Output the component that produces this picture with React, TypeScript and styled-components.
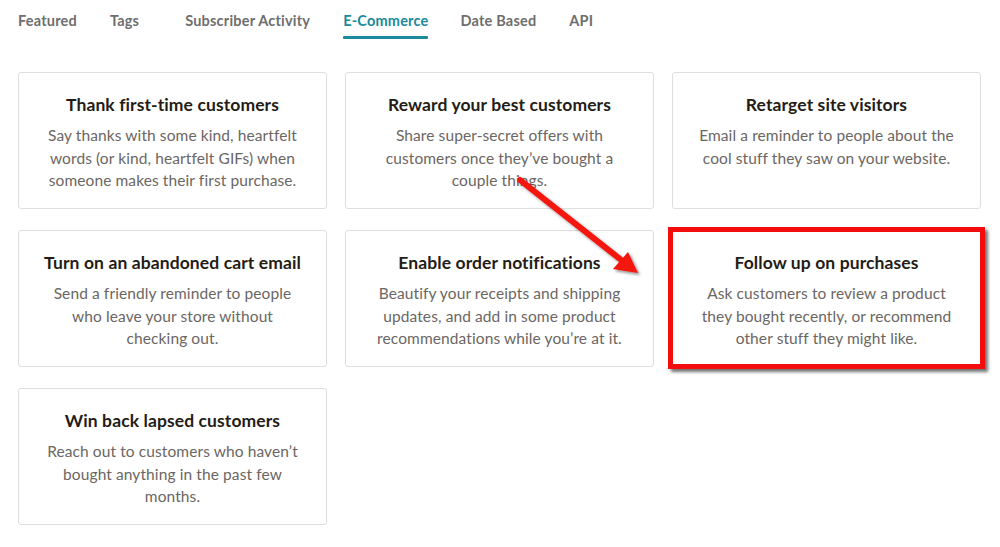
import React from 'react';
import styled, { createGlobalStyle } from 'styled-components';

const GlobalStyle = createGlobalStyle`
    html, body {
        margin: 0;
        padding: 0;
        background: #FFFFFF;
    }

    body {
        font-family: Lato, "Liberation Sans", sans-serif;
        -webkit-font-smoothing: antialiased;
    }
`;

interface ITab {
    active?: boolean,
    spacing?: number
}

interface ICard {
    highlighted?: boolean
}

const Page = styled.div`
    position: relative;
    width: 1000px;
    height: 547px;
    padding: 0 18px;
    box-sizing: border-box;
    overflow: hidden;
`;

const TabBar = styled.nav`
    display: flex;
    align-items: flex-start;
    height: 40px;
    padding-top: 11px;
    box-sizing: border-box;
`;

const Tab = styled.div`
    position: relative;
    margin-right: ${(props: ITab) => props.spacing ?? 33}px;
    font-size: 14.5px;
    font-weight: 700;
    line-height: 20px;
    letter-spacing: 0.2px;
    color: ${(props: ITab) => props.active ? '#1A8A9C' : '#6E6E6E'};

    &::after {
        content: '';
        display: ${(props: ITab) => props.active ? 'block' : 'none'};
        position: absolute;
        left: 0;
        right: 0;
        bottom: -8px;
        height: 3px;
        border-radius: 1px;
        background-color: #1A8A9C;
    }
`;

const Grid = styled.div`
    display: grid;
    grid-template-columns: repeat(3, 309px);
    grid-auto-rows: 137px;
    column-gap: 18px;
    row-gap: 21px;
    margin-top: 32px;
`;

const Card = styled.div`
    position: relative;
    display: flex;
    flex-direction: column;
    align-items: center;
    padding: 21px 26px 0;
    box-sizing: border-box;
    border: 1px solid #DEDEDE;
    border-radius: 3px;
    background-color: #FFFFFF;
    text-align: center;

    &::before {
        content: '';
        display: ${(props: ICard) => props.highlighted ? 'block' : 'none'};
        position: absolute;
        top: -4px;
        left: -5px;
        right: -5px;
        bottom: -3px;
        border: 5px solid #F20C0C;
        box-shadow: 3px 3px 3px rgba(0, 0, 0, 0.55);
        pointer-events: none;
    }
`;

const Title = styled.h3`
    margin: 0 -16px 8px;
    font-size: 17.5px;
    font-weight: 700;
    line-height: 22px;
    letter-spacing: 0.1px;
    white-space: nowrap;
    color: #241C15;
`;

const Description = styled.p`
    margin: 0;
    font-size: 15.5px;
    font-weight: 400;
    line-height: 22.5px;
    letter-spacing: 0.1px;
    color: #6B6663;
`;

const Arrow = styled.svg`
    position: absolute;
    left: 510px;
    top: 172px;
    width: 140px;
    height: 115px;
    overflow: visible;
    pointer-events: none;
`;

const tabs = [
    { label: 'Featured' },
    { label: 'Tags', spacing: 46 },
    { label: 'Subscriber Activity' },
    { label: 'E-Commerce', active: true, spacing: 32 },
    { label: 'Date Based' },
    { label: 'API' },
];

const cards = [
    {
        title: 'Thank first-time customers',
        text: 'Say thanks with some kind, heartfelt words (or kind, heartfelt GIFs) when someone makes their first purchase.',
    },
    {
        title: 'Reward your best customers',
        text: 'Share super-secret offers with customers once they\u2019ve bought a couple things.',
    },
    {
        title: 'Retarget site visitors',
        text: 'Email a reminder to people about the cool stuff they saw on your website.',
    },
    {
        title: 'Turn on an abandoned cart email',
        text: 'Send a friendly reminder to people who leave your store without checking out.',
    },
    {
        title: 'Enable order notifications',
        text: 'Beautify your receipts and shipping updates, and add in some product recommendations while you\u2019re at it.',
    },
    {
        title: 'Follow up on purchases',
        text: 'Ask customers to review a product they bought recently, or recommend other stuff they might like.',
        highlighted: true,
    },
    {
        title: 'Win back lapsed customers',
        text: 'Reach out to customers who haven\u2019t bought anything in the past few months.',
    },
];

const App = () => {
    return (
        <>
            <GlobalStyle />
            <Page>
                <TabBar>
                    {
                        tabs.map((tab) => (
                            <Tab key={tab.label} active={tab.active} spacing={tab.spacing}>{tab.label}</Tab>
                        ))
                    }
                </TabBar>
                <Grid>
                    {
                        cards.map((card) => (
                            <Card key={card.title} highlighted={card.highlighted}>
                                <Title>{card.title}</Title>
                                <Description>{card.text}</Description>
                            </Card>
                        ))
                    }
                </Grid>
                <Arrow viewBox="0 0 140 115">
                    <defs>
                        <filter id="arrowShadow" x="-20%" y="-20%" width="140%" height="140%">
                            <feDropShadow dx="2" dy="2" stdDeviation="1.5" floodColor="#000000" floodOpacity="0.45" />
                        </filter>
                    </defs>
                    <g filter="url(#arrowShadow)">
                        <line x1="10" y1="8" x2="110" y2="87" stroke="#F5120C" strokeWidth="6" strokeLinecap="round" />
                        <polygon points="128,101 103,97 118,80" fill="#F5120C" />
                    </g>
                </Arrow>
            </Page>
        </>
    );
};

export default App;
